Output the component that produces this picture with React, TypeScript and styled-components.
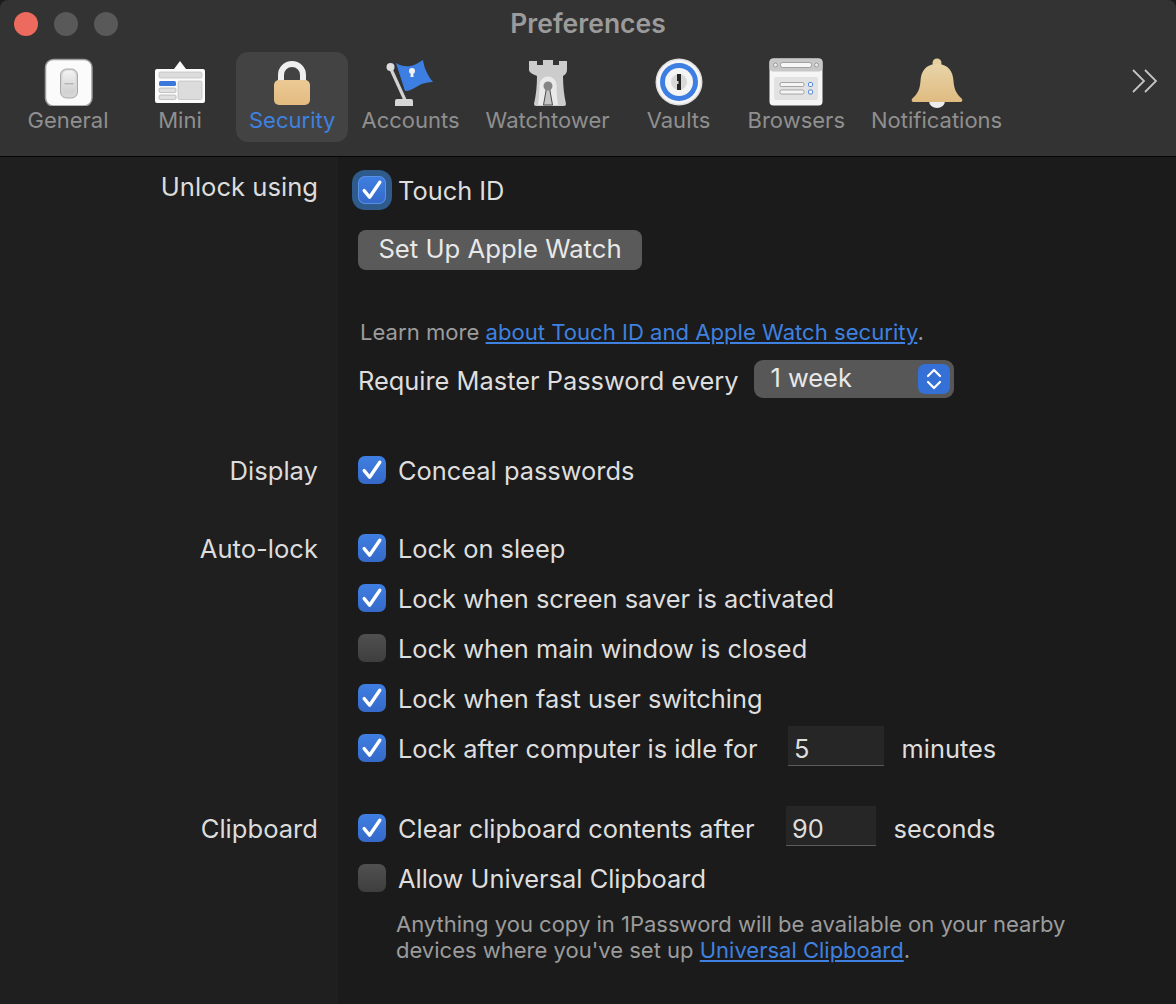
import React from 'react'
import styled, { createGlobalStyle } from 'styled-components'

const GlobalStyle = createGlobalStyle`
  html, body {
    margin: 0;
    padding: 0;
    background: #1c1c1c;
  }
  * {
    box-sizing: border-box;
  }
`

const GeneralIcon = () => (
  <svg width="50" height="48" viewBox="0 0 50 48">
    <defs>
      <linearGradient id="gen-switch" x1="0" y1="0" x2="0" y2="1">
        <stop offset="0" stopColor="#f2f2f2" />
        <stop offset="1" stopColor="#cfcfcf" />
      </linearGradient>
    </defs>
    <rect x="2.500" y="1.500" width="46.500" height="46.500" rx="8" fill="#fbfbfb" stroke="#9c9c9c" strokeWidth="1.5" />
    <rect x="17.500" y="11" width="17" height="29" rx="6" fill="#d6d6d6" stroke="#a8a8a8" />
    <rect x="19.500" y="12.500" width="13" height="23" rx="5" fill="url(#gen-switch)" />
    <rect x="21.500" y="25" width="9" height="1.4" fill="#b4b4b4" />
  </svg>
)

const MiniIcon = () => (
  <svg width="52" height="46" viewBox="0 0 52 46">
    <path d="M3 9h17l6-8 6 8h17a2 2 0 0 1 2 2v30a2 2 0 0 1-2 2H3a2 2 0 0 1-2-2V11a2 2 0 0 1 2-2z" fill="#fbfbfb" />
    <rect x="5" y="12" width="43" height="6" rx="1.5" fill="#dcdcdc" stroke="#b5b5b5" strokeWidth=".6" />
    <rect x="5" y="21" width="17" height="5" rx="1.5" fill="#3b78dc" />
    <rect x="5" y="28" width="17" height="4.5" rx="1.5" fill="#e0e0e0" stroke="#a5a5a5" strokeWidth=".6" />
    <rect x="5" y="35" width="17" height="4.5" rx="1.5" fill="#e0e0e0" stroke="#a5a5a5" strokeWidth=".6" />
    <rect x="24" y="21" width="24" height="18.500" rx="1.5" fill="#dcdcdc" stroke="#b5b5b5" strokeWidth=".6" />
  </svg>
)

const LockIcon = () => (
  <svg width="36" height="47" viewBox="0 0 36 47">
    <defs>
      <linearGradient id="lock-body" x1="0" y1="0" x2="0" y2="1">
        <stop offset="0" stopColor="#ecc995" />
        <stop offset="1" stopColor="#e3bb80" />
      </linearGradient>
    </defs>
    <path d="M7 23V16a11 11 0 0 1 22 0V23" fill="none" stroke="#efefef" strokeWidth="6" />
    <rect x="0" y="21" width="36" height="25" rx="5" fill="url(#lock-body)" />
  </svg>
)

const FlagIcon = () => (
  <svg width="50" height="48" viewBox="0 0 50 48">
    <path d="M4 9l15 33" stroke="#d2d2d2" strokeWidth="3.200" fill="none" />
    <circle cx="4.500" cy="9" r="4" fill="#dcdcdc" />
    <path d="M11 41h14a2 2 0 0 1 2 2v5H9v-5a2 2 0 0 1 2-2z" fill="#d6d6d6" />
    <path d="M10 5c6 4 13 4 18 2 4-2 6-3 9-5 1 8 5 16 10 22-5 0-10 1-15 4-5 3-9 5-13 5z" fill="#3d7ee3" />
    <circle cx="26" cy="13" r="3" fill="#f2f2f2" />
    <path d="M25 14h2l.6 5h-3.200z" fill="#f2f2f2" />
  </svg>
)

const TowerIcon = () => (
  <svg width="40" height="48" viewBox="0 0 40 48">
    <path d="M1 3h8v4h6V2h10v5h6V3h8v9c0 3-2 5-4 6 0 10 1 19 3 28a2 2 0 0 1-2 2H8a2 2 0 0 1-2-2c2-9 3-18 3-28-2-1-8-3-8-6z" fill="#cccccc" />
    <path d="M10 47c1-7 1.500-14 1.500-20a8.500 8.500 0 0 1 17 0c0 6 .5 13 1.500 20z" fill="#e9e9e9" />
    <path d="M18.500 30l-3 17h9l-3-17z" fill="#c4c4c4" stroke="#4a4a4a" strokeWidth="1" />
    <circle cx="20" cy="28" r="4.500" fill="#858585" />
  </svg>
)

const VaultIcon = () => (
  <svg width="48" height="48" viewBox="0 0 48 48">
    <circle cx="24" cy="24" r="23.500" fill="#dedede" />
    <circle cx="24" cy="24" r="22" fill="#f5f5f5" />
    <circle cx="24" cy="24" r="19" fill="#3d7ee3" />
    <circle cx="24" cy="24" r="14" fill="#f4f4f4" />
    <circle cx="24" cy="24" r="8" fill="#d8d8d8" />
    <path d="M22 16h4v16h-4v-6h1.500v-3H22z" fill="#262626" />
  </svg>
)

const BrowserIcon = () => (
  <svg width="54" height="48" viewBox="0 0 54 48">
    <rect x=".5" y=".5" width="53" height="47" rx="4" fill="#f5f5f5" />
    <rect x=".5" y=".5" width="53" height="13" rx="4" fill="#c8c8c8" />
    <circle cx="6.500" cy="7" r="2" fill="#ececec" stroke="#777" strokeWidth=".6" />
    <circle cx="47.500" cy="7" r="2" fill="#ececec" stroke="#777" strokeWidth=".6" />
    <rect x="11.500" y="4.500" width="31" height="5" rx="2" fill="#f6f6f6" stroke="#777" strokeWidth=".6" />
    <rect x="5" y="19" width="44" height="23" rx="2" fill="#e2e2e2" />
    <rect x="11" y="24.500" width="24" height="4" rx="1.500" fill="#f5f5f5" stroke="#777" strokeWidth=".6" />
    <rect x="11" y="32" width="24" height="4" rx="1.500" fill="#f5f5f5" stroke="#777" strokeWidth=".6" />
    <rect x="39.500" y="24.500" width="4" height="4" rx="1.200" fill="#f5f5f5" stroke="#3a78d8" strokeWidth=".9" />
    <rect x="39.500" y="32" width="4" height="4" rx="1.200" fill="#f5f5f5" stroke="#3a78d8" strokeWidth=".9" />
  </svg>
)

const BellIcon = () => (
  <BellSvg width="52" height="50" viewBox="0 0 52 50">
    <defs>
      <linearGradient id="bell-body" x1="0" y1="0" x2="0" y2="1">
        <stop offset="0" stopColor="#e8d4a8" />
        <stop offset="1" stopColor="#dfbb80" />
      </linearGradient>
    </defs>
    <path d="M18 43a8 7 0 0 0 16 0z" fill="#ededed" />
    <circle cx="26" cy="5" r="4.500" fill="#e4cf9f" />
    <path d="M26 6C14 6 10 14 9.500 23c-.500 8-3 13-8.500 18-.800 1-.300 3 1.500 3h47c1.800 0 2.300-2 1.500-3-5.500-5-8-10-8.500-18C42 14 38 6 26 6z" fill="url(#bell-body)" />
  </BellSvg>
)

const tabs = [
  { label: 'General', icon: <GeneralIcon /> },
  { label: 'Mini', icon: <MiniIcon /> },
  { label: 'Security', icon: <LockIcon />, active: true },
  { label: 'Accounts', icon: <FlagIcon /> },
  { label: 'Watchtower', icon: <TowerIcon /> },
  { label: 'Vaults', icon: <VaultIcon /> },
  { label: 'Browsers', icon: <BrowserIcon /> },
  { label: 'Notifications', icon: <BellIcon /> },
]

const Check = ({ on = true, focus = false }: { on?: boolean; focus?: boolean }) => (
  <CheckBox $on={on} $focus={focus}>
    {on && (
      <svg width="24" height="24" viewBox="0 0 20 20">
        <path d="M3.500 10.500l4.500 5.500 8.500-12.500" fill="none" stroke="#fff" strokeWidth="2.800" strokeLinecap="round" strokeLinejoin="round" />
      </svg>
    )}
  </CheckBox>
)

const App = () => {
  return (
    <Window>
      <GlobalStyle />
      <Header>
        <TitleBar>
          <Lights>
            <Light $color="#ec6a5e" />
            <Light $color="#595959" />
            <Light $color="#595959" />
          </Lights>
          <Title>Preferences</Title>
        </TitleBar>
        <Toolbar>
          {tabs.map((tab) => (
            <Tab key={tab.label} $active={tab.active}>
              <TabIcon>{tab.icon}</TabIcon>
              <TabLabel $active={tab.active}>{tab.label}</TabLabel>
            </Tab>
          ))}
          <More>
            <svg width="26" height="24" viewBox="0 0 26 24">
              <path d="M1 1l11 11L1 23M13 1l11 11-11 11" fill="none" stroke="#c4c4c4" strokeWidth="1.800" />
            </svg>
          </More>
        </Toolbar>
      </Header>

      <Content>
        <Section $top={15}>
          <Label>Unlock using</Label>
          <Controls>
            <TouchRow>
              <Check focus />
              <span>Touch ID</span>
            </TouchRow>
            <WatchButton>Set Up Apple Watch</WatchButton>
            <LearnMore>
              Learn more <TextLink>about Touch ID and Apple Watch security</TextLink>.
            </LearnMore>
            <SelectRow>
              <SelectLabel>Require Master Password every</SelectLabel>
              <Select>
                <span>1 week</span>
                <Stepper>
                  <svg width="16" height="24" viewBox="0 0 16 24">
                    <path d="M2 9l6-6 6 6M2 15l6 6 6-6" fill="none" stroke="#fff" strokeWidth="2.200" strokeLinecap="round" strokeLinejoin="round" />
                  </svg>
                </Stepper>
              </Select>
            </SelectRow>
          </Controls>
        </Section>

        <Section $top={58}>
          <Label>Display</Label>
          <Controls>
            <Row>
              <Check />
              Conceal passwords
            </Row>
          </Controls>
        </Section>

        <Section $top={49}>
          <Label>Auto-lock</Label>
          <Controls>
            <Row>
              <Check />
              Lock on sleep
            </Row>
            <Row>
              <Check />
              Lock when screen saver is activated
            </Row>
            <Row>
              <Check on={false} />
              Lock when main window is closed
            </Row>
            <Row>
              <Check />
              Lock when fast user switching
            </Row>
            <Row>
              <Check />
              Lock after computer is idle for
              <NumberField $width={96} $gap={30}>5</NumberField>
              <Unit>minutes</Unit>
            </Row>
          </Controls>
        </Section>

        <Section $top={52}>
          <Label>Clipboard</Label>
          <Controls>
            <Row>
              <Check />
              Clear clipboard contents after
              <NumberField $width={90} $gap={31}>90</NumberField>
              <Unit>seconds</Unit>
            </Row>
            <Row>
              <Check on={false} />
              Allow Universal Clipboard
            </Row>
            <Note>
              Anything you copy in 1Password will be available on your nearby
              <br />
              devices where you've set up <TextLink>Universal Clipboard</TextLink>.
            </Note>
          </Controls>
        </Section>
      </Content>
    </Window>
  )
}

export default App

const Window = styled.div`
  width: 1176px;
  height: 1004px;
  overflow: hidden;
  display: flex;
  flex-direction: column;
  font-family: Inter, 'Liberation Sans', sans-serif;
  font-size: 25.4px;
  color: #dedede;
`

const Header = styled.header`
  height: 157px;
  flex-shrink: 0;
  background: #333333;
  border-bottom: 1px solid #050505;
  border-top-left-radius: 8px;
  border-top-right-radius: 8px;
`

const TitleBar = styled.div`
  display: grid;
  grid-template-columns: 1fr auto 1fr;
  align-items: center;
  height: 48px;
`

const Lights = styled.div`
  display: flex;
  gap: 16px;
  padding-left: 14px;
`

const Light = styled.span<{ $color: string }>`
  width: 24px;
  height: 24px;
  border-radius: 50%;
  background: ${(p) => p.$color};
`

const Title = styled.h1`
  margin: 0;
  padding-bottom: 2px;
  font-size: 26.500px;
  font-weight: 600;
  color: #9b9b9b;
`

const Toolbar = styled.nav`
  display: flex;
  align-items: flex-start;
  padding: 4px 18px 0 12px;
`

const Tab = styled.div<{ $active?: boolean }>`
  min-width: 112px;
  height: 90px;
  padding: 6px 13px 0;
  display: flex;
  flex-direction: column;
  align-items: center;
  border-radius: 12px;
  background: ${(p) => (p.$active ? '#434343' : 'transparent')};
`

const TabIcon = styled.div`
  height: 48px;
  display: flex;
  align-items: flex-end;
  justify-content: center;
`

const BellSvg = styled.svg`
  margin-bottom: -2px;
  flex-shrink: 0;
`

const TabLabel = styled.span<{ $active?: boolean }>`
  margin-top: -1px;
  font-size: 22px;
  line-height: 30px;
  white-space: nowrap;
  color: ${(p) => (p.$active ? '#3f81e0' : '#8f8f8f')};
`

const More = styled.div`
  margin-left: auto;
  padding-top: 16px;
`

const Content = styled.main`
  flex: 1;
  background: linear-gradient(to right, #1f1f1f 338px, #1b1b1b 338px);
`

const Section = styled.section<{ $top: number }>`
  display: grid;
  grid-template-columns: 318px 1fr;
  column-gap: 40px;
  margin-top: ${(p) => p.$top}px;
`

const Label = styled.div`
  margin-top: 1px;
  text-align: right;
  line-height: 28px;
  font-size: 25.600px;
  color: #dcdcdc;
`

const Controls = styled.div`
  display: flex;
  flex-direction: column;
  gap: 22px;
`

const Row = styled.div`
  display: flex;
  align-items: center;
  gap: 12px;
  height: 28px;
  white-space: nowrap;
`

const TouchRow = styled(Row)`
  margin-top: 4px;
`

const CheckBox = styled.span<{ $on: boolean; $focus: boolean }>`
  width: 28px;
  height: 28px;
  flex-shrink: 0;
  display: flex;
  align-items: center;
  justify-content: center;
  border-radius: 7px;
  background: ${(p) => (p.$on ? 'linear-gradient(#3f7fe2, #3569c9)' : 'linear-gradient(#505050, #3e3e3e)')};
  box-shadow: ${(p) => (p.$focus ? 'inset 0 0 0 1px #5a8fe6, 0 0 0 6px #2f5a8c' : 'none')};
`

const WatchButton = styled.button`
  width: 284px;
  height: 40px;
  margin-top: 4px;
  padding: 0 0 3px;
  border: 0;
  border-radius: 8px;
  background: #5a5a5a;
  font: inherit;
  font-size: 25.700px;
  color: #e8e8e8;
`

const LearnMore = styled.div`
  margin-top: 25px;
  padding-left: 2px;
  line-height: 30px;
  font-size: 22.100px;
  color: #9c9c9c;
`

const TextLink = styled.a`
  color: #3f81e0;
  text-decoration: underline;
`

const SelectRow = styled.div`
  display: flex;
  align-items: center;
  gap: 16px;
  margin-top: -9px;
  height: 38px;
  white-space: nowrap;
`

const SelectLabel = styled.span`
  padding-top: 2px;
`

const Select = styled.div`
  width: 200px;
  height: 38px;
  padding: 0 4px 4px 16px;
  display: flex;
  align-items: center;
  justify-content: space-between;
  border-radius: 9px;
  background: #575757;
  color: #e8e8e8;
`

const Stepper = styled.span`
  width: 32px;
  height: 30px;
  margin-bottom: -4px;
  display: flex;
  align-items: center;
  justify-content: center;
  border-radius: 7px;
  background: #3570d6;
`

const NumberField = styled.span<{ $width: number; $gap: number }>`
  width: ${(p) => p.$width}px;
  height: 40px;
  flex-shrink: 0;
  margin-left: ${(p) => p.$gap - 12}px;
  margin-bottom: 4px;
  padding: 6px 0 0 6.500px;
  display: flex;
  align-items: center;
  background: #262626;
  border-bottom: 1px solid #5c5c5c;
`

const Unit = styled.span`
  margin-left: 6px;
`

const Note = styled.div`
  margin-top: -3px;
  margin-left: 38px;
  font-size: 22px;
  line-height: 26px;
  color: #9c9c9c;
`
